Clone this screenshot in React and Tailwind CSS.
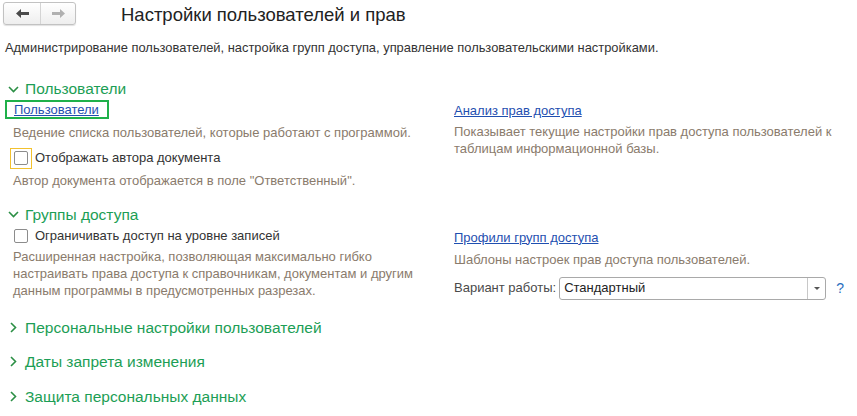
import React from "react";

const F = { fontFamily: '"Liberation Sans", Arial, sans-serif' };

function ChevronDown() {
  return (
    <svg width="11" height="7" viewBox="0 0 11 7" className="shrink-0">
      <path d="M1 1 L5.5 5.5 L10 1" fill="none" stroke="#2b8f45" strokeWidth="1.6" />
    </svg>
  );
}
function ChevronRight() {
  return (
    <svg width="7" height="11" viewBox="0 0 7 11" className="shrink-0">
      <path d="M1 1 L5.5 5.5 L1 10" fill="none" stroke="#2b8f45" strokeWidth="1.6" />
    </svg>
  );
}

function Header({ open, children }) {
  return (
    <div className="flex items-center h-[20px] text-[15.5px] text-[#1c9e55] leading-[20px]">
      <div className="w-[25px] flex justify-center pl-[1px]">
        {open ? <ChevronDown /> : <ChevronRight />}
      </div>
      <span>{children}</span>
    </div>
  );
}

function Checkbox() {
  return <div className="w-[14px] h-[14px] border border-[#8c8c8c] rounded-[2px] bg-white" />;
}

function Arrow({ dir, color }) {
  return (
    <svg width="13" height="9" viewBox="0 0 13 9">
      {dir === "left" ? (
        <path d="M0 4.5 L5 0 L5 3 L13 3 L13 6 L5 6 L5 9 Z" fill={color} />
      ) : (
        <path d="M13 4.5 L8 0 L8 3 L0 3 L0 6 L8 6 L8 9 Z" fill={color} />
      )}
    </svg>
  );
}

export default function App() {
  return (
    <div style={F} className="w-[857px] h-[416px] bg-white text-[13px] text-[#333] overflow-hidden relative">
      {/* top bar */}
      <div className="flex items-start h-[28px] pt-[2px] pl-[3px]">
        <div className="flex h-[23px] w-[73px] border border-[#c2c2c2] rounded-[3px] bg-gradient-to-b from-white to-[#eeeeee] shadow-[0_1px_1px_rgba(0,0,0,0.12)]">
          <div className="w-[37px] flex items-center justify-center border-r border-[#d4d4d4]">
            <Arrow dir="left" color="#4a4a4a" />
          </div>
          <div className="flex-1 flex items-center justify-center">
            <Arrow dir="right" color="#b0b0b0" />
          </div>
        </div>
        <div className="ml-[45px] text-[18.5px] leading-[28px] mt-[-1px] text-[#222]">Настройки пользователей и прав</div>
      </div>

      <div className="mt-[12px] pl-[5px] leading-[16px] text-[12.9px] text-[#333]">
        Администрирование пользователей, настройка групп доступа, управление пользовательскими настройками.
      </div>

      {/* section 1 */}
      <div className="mt-[23px]">
        <Header open>Пользователи</Header>
      </div>
      <div className="flex">
        <div className="w-[454px] pl-[5px]">
          <div className="mt-[1px] inline-flex h-[19px] items-center border-2 border-[#1fb04a] pl-[7px] pr-[8px]">
            <span className="text-[#1f4fb0] underline leading-[15px]">Пользователи</span>
          </div>
          <div className="mt-[5px] pl-[8px] leading-[16px] text-[#8a7b6c]">
            Ведение списка пользователей, которые работают с программой.
          </div>
          <div className="mt-[7px] flex items-center h-[21px]">
            <div className="ml-[5px] w-[22px] h-[21px] border border-[#f2c12e] flex items-center justify-center">
              <Checkbox />
            </div>
            <span className="ml-[3px] text-[#333]">Отображать автора документа</span>
          </div>
          <div className="mt-[4px] pl-[8px] leading-[16px] text-[#8a7b6c]">
            Автор документа отображается в поле "Ответственный".
          </div>
        </div>
        <div className="flex-1">
          <div className="mt-[4px] leading-[16px]">
            <span className="text-[#1f4fb0] underline">Анализ прав доступа</span>
          </div>
          <div className="mt-[4px] leading-[17px] text-[#8a7b6c] w-[380px]">
            Показывает текущие настройки прав доступа пользователей к таблицам информационной базы.
          </div>
        </div>
      </div>

      {/* section 2 */}
      <div className="mt-[16px]">
        <Header open>Группы доступа</Header>
      </div>
      <div className="flex">
        <div className="w-[454px] pl-[5px]">
          <div className="mt-[2px] flex items-center h-[18px]">
            <div className="ml-[9px]">
              <Checkbox />
            </div>
            <span className="ml-[7px] text-[#333]">Ограничивать доступ на уровне записей</span>
          </div>
          <div className="mt-[3px] pl-[8px] leading-[17px] text-[#8a7b6c] w-[420px]">
            Расширенная настройка, позволяющая максимально гибко настраивать права доступа к справочникам, документам и другим данным программы в предусмотренных разрезах.
          </div>
        </div>
        <div className="flex-1">
          <div className="mt-[5px] leading-[16px]">
            <span className="text-[#1f4fb0] underline">Профили групп доступа</span>
          </div>
          <div className="mt-[6px] leading-[16px] text-[#8a7b6c]">
            Шаблоны настроек прав доступа пользователей.
          </div>
          <div className="mt-[9px] flex items-center h-[23px]">
            <span className="text-[#4a4a4a]">Вариант работы:</span>
            <div className="ml-[3px] w-[267px] h-[23px] border border-[#a9a9a9] rounded-[3px] flex items-center bg-white">
              <span className="pl-[4px] flex-1 text-[#222]">Стандартный</span>
              <div className="w-[18px] h-full border-l border-[#c8c8c8] flex items-center justify-center">
                <svg width="6" height="3" viewBox="0 0 6 3"><path d="M0 0 L6 0 L3 3 Z" fill="#555" /></svg>
              </div>
            </div>
            <span className="ml-[10px] text-[#2a6fc0] text-[14px]">?</span>
          </div>
        </div>
      </div>

      <div className="mt-[18px]">
        <Header>Персональные настройки пользователей</Header>
      </div>
      <div className="mt-[14px]">
        <Header>Даты запрета изменения</Header>
      </div>
      <div className="mt-[15px]">
        <Header>Защита персональных данных</Header>
      </div>
    </div>
  );
}
